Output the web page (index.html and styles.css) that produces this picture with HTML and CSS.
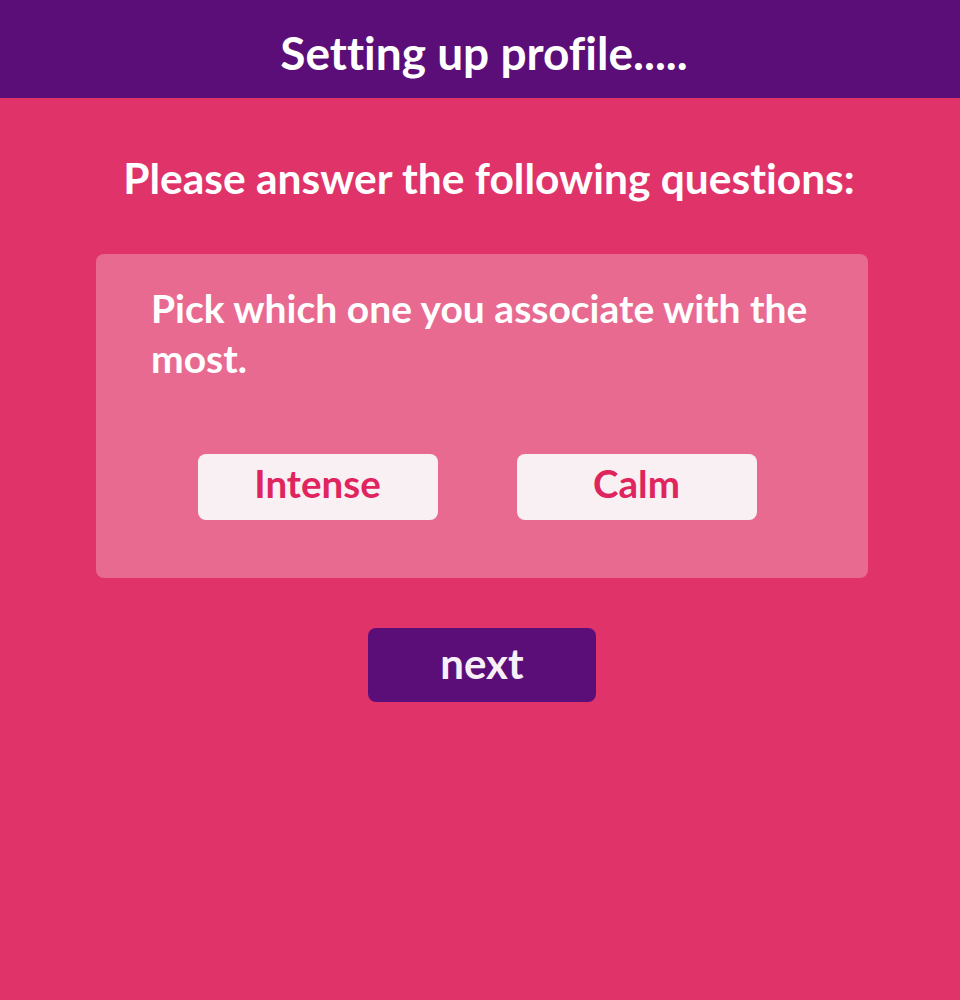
FILE: index.html
```html
<!DOCTYPE html>
<html>
<head>
<meta charset="utf-8">
<link rel="stylesheet" href="styles.css">
</head>
<body>
<header class="topbar"><h1 class="title">Setting up profile.....</h1></header>
<main class="content">
  <h2 class="subtitle">Please answer the following questions:</h2>
  <section class="card">
    <p class="question">Pick which one you associate with the most.</p>
    <div class="choices">
      <button class="choice">Intense</button>
      <button class="choice">Calm</button>
    </div>
  </section>
  <button class="next">next</button>
</main>
</body>
</html>
```
FILE: styles.css
```css
html, body {
  margin: 0;
  padding: 0;
}
body {
  background: #e0336a;
  font-family: "Lato", "Open Sans", sans-serif;
  font-variant-ligatures: none;
  width: 960px;
  height: 1000px;
}
.topbar {
  background: #5c0e78;
  height: 98px;
  box-sizing: border-box;
  padding-top: 6px;
  display: flex;
  align-items: center;
  justify-content: center;
}
.title {
  margin: 0;
  color: #ffffff;
  font-weight: 700;
  font-size: 46px;
  padding-left: 8px;
}
.content {
  display: flex;
  flex-direction: column;
  align-items: center;
  padding-left: 4px;
}
.subtitle {
  margin: 52px 0 0 0;
  color: #ffffff;
  font-weight: 700;
  font-size: 42.5px;
  line-height: 56px;
  padding-left: 14px;
}
.card {
  margin-top: 48px;
  width: 772px;
  height: 324px;
  box-sizing: border-box;
  background: #e86a91;
  border-radius: 8px;
  padding: 29px 55px 58px 55px;
  display: flex;
  flex-direction: column;
}
.question {
  margin: 0;
  color: #ffffff;
  font-weight: 700;
  font-size: 39px;
  line-height: 50px;
}
.choices {
  margin-top: auto;
  display: flex;
  justify-content: center;
  gap: 79px;
  padding-right: 10px;
}
.choice {
  width: 240px;
  height: 66px;
  border: none;
  border-radius: 8px;
  background: #f8f0f3;
  color: #e0245e;
  font-family: inherit;
  font-variant-ligatures: none;
  font-weight: 700;
  font-size: 38.5px;
  padding: 0 0 9px 0;
}
.next {
  margin-top: 50px;
  width: 228px;
  height: 74px;
  border: none;
  border-radius: 8px;
  background: #5c0e78;
  color: #f8f0f8;
  font-family: inherit;
  font-variant-ligatures: none;
  font-weight: 700;
  font-size: 42px;
  padding: 0 0 4px 0;
}
```
